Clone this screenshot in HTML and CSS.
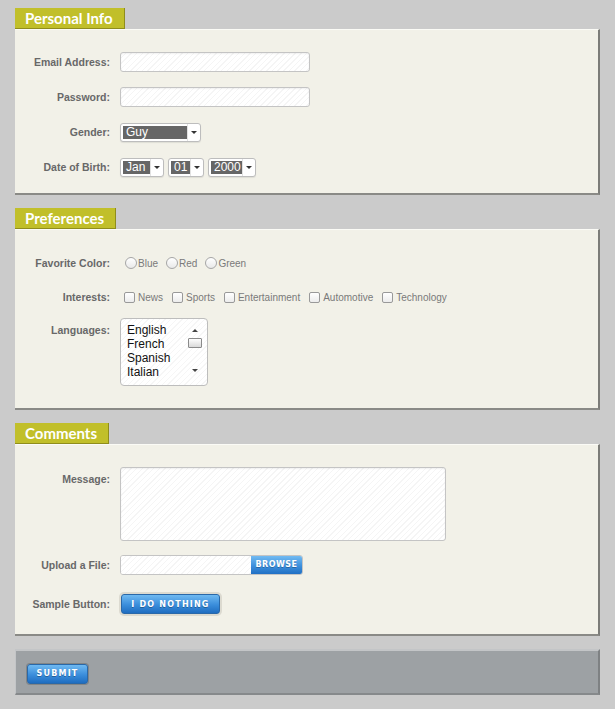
FILE: index.html
```html
<!DOCTYPE html>
<html lang="en">
<head>
    <meta charset="UTF-8">
    <meta name="viewport" content="width=device-width, initial-scale=1.0">
    <title>Sample Form</title>
    <link rel="stylesheet" href="styles.css">
</head>
<body>
    <form class="form">
        <div class="section">
            <h2 class="tab">Personal Info</h2>
            <div class="panel panel-personal">
                <div class="row">
                    <label class="label">Email Address:</label>
                    <input type="text" class="field field-md">
                </div>
                <div class="row">
                    <label class="label">Password:</label>
                    <input type="password" class="field field-md">
                </div>
                <div class="row">
                    <label class="label">Gender:</label>
                    <span class="select select-gender">
                        <span class="select-value">Guy</span>
                        <span class="select-arrow"></span>
                    </span>
                </div>
                <div class="row">
                    <label class="label">Date of Birth:</label>
                    <div class="dob">
                        <span class="select select-month">
                            <span class="select-value">Jan</span>
                            <span class="select-arrow"></span>
                        </span>
                        <span class="select select-day">
                            <span class="select-value">01</span>
                            <span class="select-arrow"></span>
                        </span>
                        <span class="select select-year">
                            <span class="select-value">2000</span>
                            <span class="select-arrow"></span>
                        </span>
                    </div>
                </div>
            </div>
        </div>

        <div class="section">
            <h2 class="tab">Preferences</h2>
            <div class="panel panel-prefs">
                <div class="row">
                    <label class="label">Favorite Color:</label>
                    <div class="options options-radio">
                        <span class="option"><span class="radio"></span>Blue</span>
                        <span class="option"><span class="radio"></span>Red</span>
                        <span class="option"><span class="radio"></span>Green</span>
                    </div>
                </div>
                <div class="row">
                    <label class="label">Interests:</label>
                    <div class="options">
                        <span class="option"><span class="check"></span>News</span>
                        <span class="option"><span class="check"></span>Sports</span>
                        <span class="option"><span class="check"></span>Entertainment</span>
                        <span class="option"><span class="check"></span>Automotive</span>
                        <span class="option"><span class="check"></span>Technology</span>
                    </div>
                </div>
                <div class="row row-top row-list">
                    <label class="label">Languages:</label>
                    <div class="listbox">
                        <ul class="listbox-items">
                            <li>English</li>
                            <li>French</li>
                            <li>Spanish</li>
                            <li>Italian</li>
                        </ul>
                        <div class="scrollbar">
                            <span class="scroll-up"></span>
                            <span class="scroll-thumb"></span>
                            <span class="scroll-down"></span>
                        </div>
                    </div>
                </div>
            </div>
        </div>

        <div class="section">
            <h2 class="tab">Comments</h2>
            <div class="panel panel-comments">
                <div class="row row-top">
                    <label class="label">Message:</label>
                    <textarea class="field field-area"></textarea>
                </div>
                <div class="row">
                    <label class="label">Upload a File:</label>
                    <div class="file">
                        <span class="file-name"></span>
                        <span class="file-browse">Browse</span>
                    </div>
                </div>
                <div class="row row-button">
                    <label class="label">Sample Button:</label>
                    <button type="button" class="btn btn-halo">I do nothing</button>
                </div>
            </div>
        </div>

        <div class="footer">
            <button type="button" class="btn btn-submit">Submit</button>
        </div>
    </form>
</body>
</html>
```

FILE: styles.css
```css
* {
    margin: 0;
    padding: 0;
    box-sizing: border-box;
}

body {
    background: #cbcbcb;
    font-family: "Liberation Sans", Arial, sans-serif;
    padding: 8px 15px 0 15px;
}

.form {
    width: 585px;
}

.section {
    margin-bottom: 13px;
}

.tab {
    display: inline-block;
    height: 21px;
    line-height: 20px;
    padding: 0 11px 0 10px;
    background: #c1bf2a;
    border-right: 1px solid #8f8d1c;
    border-bottom: 1px solid #8f8d1c;
    color: #fff;
    font-family: Lato, "Open Sans", sans-serif;
    font-weight: 700;
    font-size: 15px;
    vertical-align: top;
}

.panel {
    background: #f2f1e8;
    border-top: 1px solid #fbfbf6;
    border-right: 2px solid #7c7c78;
    border-bottom: 2px solid #8a8a86;
    padding: 22px 0 16px 0;
    display: flex;
    flex-direction: column;
    gap: 14px;
}

.panel-personal {
    gap: 15px;
}

.panel-prefs {
    padding-top: 23px;
    padding-bottom: 22px;
}

.panel-comments {
    padding-bottom: 20px;
}

.row {
    display: flex;
    align-items: center;
    min-height: 20px;
}

.row-top {
    align-items: flex-start;
}

.row-top .label {
    padding-top: 6px;
}

.row-list {
    margin-top: -3px;
}

.row-button {
    margin-top: 5px;
}

.label {
    flex: 0 0 95px;
    margin-right: 10px;
    text-align: right;
    font-size: 10.5px;
    font-weight: 700;
    color: #686868;
}

/* text inputs */
.field {
    border: 1px solid #c4c4c4;
    border-radius: 3px;
    background: repeating-linear-gradient(135deg, #ffffff 0 3px, #f5f5f5 3px 4px);
    box-shadow: inset 0 1px 2px rgba(0, 0, 0, 0.06);
    outline: none;
    font-family: inherit;
}

.field-md {
    width: 190px;
    height: 20px;
}

.field-area {
    width: 326px;
    height: 74px;
    resize: none;
}

/* fake selects */
.select {
    display: inline-flex;
    align-items: center;
    height: 19px;
    padding-left: 2px;
    background: #fff;
    border: 1px solid #bdbdbd;
    border-radius: 3px;
    box-shadow: 0 1px 1px rgba(0, 0, 0, 0.08);
}

.select-value {
    height: 13px;
    line-height: 13px;
    padding-left: 3px;
    background: #666;
    color: #fff;
    font-size: 12px;
}

.select-arrow {
    position: relative;
    width: 13px;
    height: 17px;
    border-left: 1px solid #e2e2e2;
}

.select-arrow::after {
    content: "";
    position: absolute;
    left: 3px;
    top: 7px;
    border-left: 3px solid transparent;
    border-right: 3px solid transparent;
    border-top: 3px solid #333;
}

.select-gender .select-value { width: 64px; }
.select-month .select-value { width: 27px; }
.select-day .select-value { width: 19px; }
.select-year .select-value { width: 31px; }

.dob {
    display: flex;
    gap: 4px;
}

/* radios and checkboxes */
.options {
    display: flex;
    align-items: center;
    gap: 9px;
    margin-left: 4px;
}

.options-radio {
    gap: 8px;
    margin-left: 5px;
}

.option {
    display: inline-flex;
    align-items: center;
    font-size: 10px;
    color: #7a7a7a;
}

.radio {
    width: 12px;
    height: 12px;
    margin-right: 1px;
    border: 1px solid #a6a6a6;
    border-radius: 50%;
    background: linear-gradient(#ffffff, #e9e9e9);
}

.check {
    width: 11px;
    height: 11px;
    margin-right: 3px;
    border: 1px solid #999;
    border-radius: 2px;
    background: linear-gradient(#ffffff, #ececec);
}

/* listbox */
.listbox {
    display: flex;
    justify-content: space-between;
    width: 88px;
    height: 68px;
    padding: 4px 4px 4px 6px;
    border: 1px solid #bdbdbd;
    border-radius: 4px;
    background: repeating-linear-gradient(135deg, #ffffff 0 3px, #f6f6f6 3px 4px);
}

.listbox-items {
    list-style: none;
    font-size: 12px;
    line-height: 14px;
    color: #111;
}

.scrollbar {
    display: flex;
    flex-direction: column;
    align-items: center;
    width: 16px;
    padding-top: 6px;
}

.scroll-up,
.scroll-down {
    width: 0;
    height: 0;
    border-left: 3px solid transparent;
    border-right: 3px solid transparent;
}

.scroll-up {
    border-bottom: 3px solid #444;
}

.scroll-thumb {
    width: 14px;
    height: 10px;
    margin-top: 6px;
    border: 1px solid #8a8a8a;
    border-radius: 1px;
    background: linear-gradient(#fdfdfd, #d9d9d9);
}

.scroll-down {
    margin-top: 21px;
    border-top: 3px solid #444;
}

/* file upload */
.file {
    display: flex;
    width: 183px;
    height: 20px;
    border: 1px solid #c4c4c4;
    border-radius: 3px;
    overflow: hidden;
}

.file-name {
    flex: 1;
    background: repeating-linear-gradient(135deg, #ffffff 0 3px, #f5f5f5 3px 4px);
}

.file-browse {
    width: 51px;
    line-height: 18px;
    text-align: center;
    background: linear-gradient(#72bbf2, #3d8fdc 55%, #2070c4);
    color: #fff;
    font-family: "DejaVu Sans", Verdana, sans-serif;
    font-size: 8px;
    font-weight: 700;
    letter-spacing: 0.5px;
    text-transform: uppercase;
    text-shadow: 0 1px 0 rgba(0, 0, 0, 0.25);
}

/* buttons */
.btn {
    height: 20px;
    border: 1px solid #2a68a8;
    border-radius: 3px;
    background: linear-gradient(#6fb9f1, #3a8ddb 55%, #1f6dc0);
    color: #fff;
    font-family: "DejaVu Sans", Verdana, sans-serif;
    font-size: 8px;
    font-weight: 700;
    letter-spacing: 1.2px;
    text-transform: uppercase;
    text-shadow: 0 1px 0 rgba(0, 0, 0, 0.3);
    cursor: pointer;
}

.btn-halo {
    width: 99px;
    margin-left: 1px;
    box-shadow: 0 0 0 2px #dcdad0;
}

.btn-submit {
    width: 61px;
    box-shadow: 0 0 0 1px rgba(80, 80, 80, 0.35);
}

.footer {
    margin-top: 4px;
    height: 46px;
    padding: 11px 0 0 11px;
    background: #9da1a4;
    border-top: 2px solid #c3c5c7;
    border-left: 1px solid #c3c5c7;
    border-right: 2px solid #7e8183;
    border-bottom: 2px solid #86898b;
}
```
